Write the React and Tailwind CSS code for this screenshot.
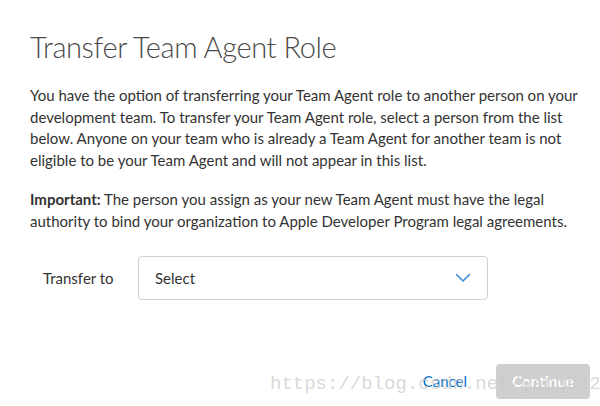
import React from 'react';

const Chevron = () => (
    <svg width="16" height="10" viewBox="0 0 16 10" fill="none">
        <path d="M1.5 1.5 L8 8 L14.5 1.5" stroke="#3b8fd9" strokeWidth="1.6" strokeLinecap="round" strokeLinejoin="round" />
    </svg>
);

const App = () => {
    return (
        <div className="relative w-[600px] h-[406px] overflow-hidden bg-white text-[#333] font-['Lato','Liberation_Sans',sans-serif]">
            <div className="pl-[30px] pt-[28px]">
                <h1 className="text-[29px] font-light leading-[38px] tracking-[-0.4px] text-[#4a4a4a]">Transfer Team Agent Role</h1>

                <p className="mt-[19px] text-[15px] leading-[21.5px] whitespace-nowrap">
                    You have the option of transferring your Team Agent role to another person on your<br />
                    development team. To transfer your Team Agent role, select a person from the list<br />
                    below. Anyone on your team who is already a Team Agent for another team is not<br />
                    eligible to be your Team Agent and will not appear in this list.
                </p>

                <p className="mt-[18px] text-[15px] leading-[21.5px] whitespace-nowrap">
                    <span className="font-bold">Important:</span> The person you assign as your new Team Agent must have the legal<br />
                    authority to bind your organization to Apple Developer Program legal agreements.
                </p>

                <div className="mt-[24px] flex items-center">
                    <label className="w-[108px] pl-[13px] text-[15px]">Transfer to</label>
                    <div className="flex items-center justify-between w-[350px] h-[44px] border border-[#cfcfcf] rounded-[4px] pl-[16px] pr-[16px]">
                        <span className="text-[15px]">Select</span>
                        <Chevron />
                    </div>
                </div>
            </div>

            <div className="flex items-center justify-end gap-[29px] pr-[10px] mt-[64px]">
                <button className="text-[15px] text-[#0070c9]">Cancel</button>
                <button className="w-[94px] h-[35px] rounded-[4px] bg-[#cfcfcf] text-white text-[15px] font-bold">Continue</button>
            </div>

            <div className="absolute left-[270px] top-[370px] text-[19px] text-[#c8c8c8]/70 font-['Liberation_Mono',monospace] whitespace-nowrap pointer-events-none">
                https://blog.csdn.net/yangb120
            </div>
        </div>
    );
};

export default App;
